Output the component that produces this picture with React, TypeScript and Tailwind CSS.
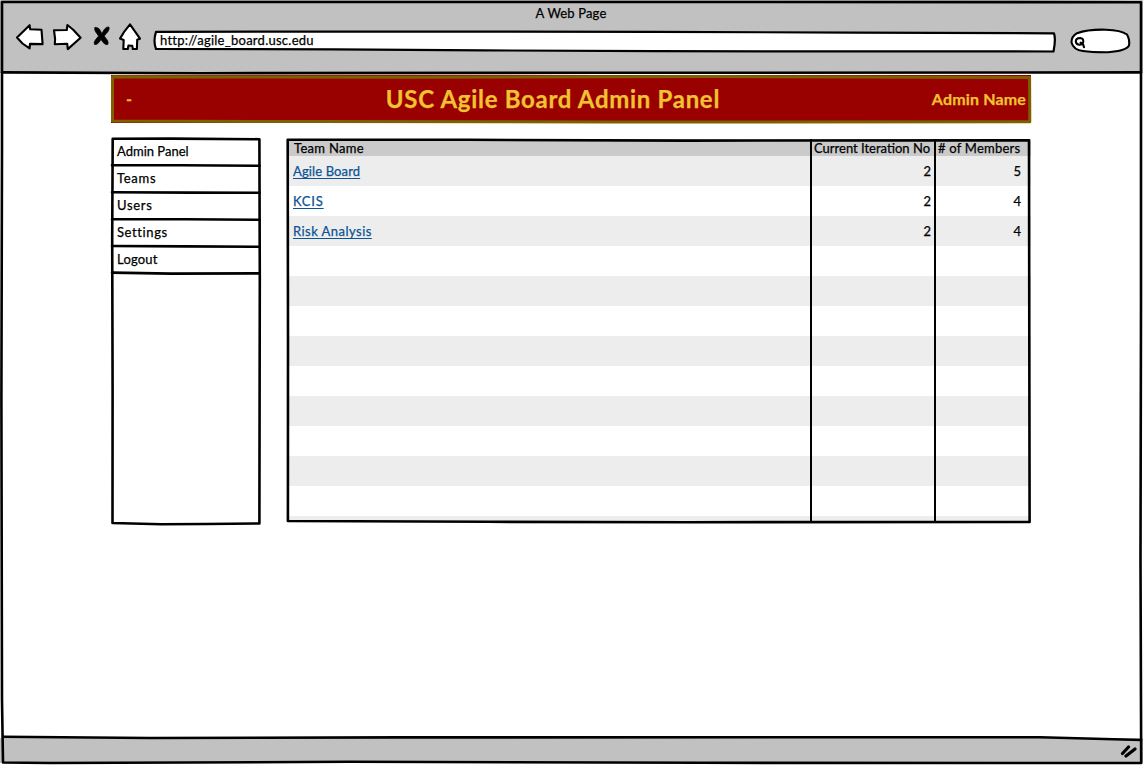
import type { ReactNode } from "react";

const menu = [
  { label: "Admin Panel", tracking: "tracking-[0px]" },
  { label: "Teams", tracking: "tracking-[0.7px]" },
  { label: "Users", tracking: "tracking-[0.7px]" },
  { label: "Settings", tracking: "tracking-[0.6px]" },
  { label: "Logout", tracking: "tracking-[0.2px]" },
];

const teams = [
  { name: "Agile Board", iteration: 2, members: 5, tracking: "tracking-[0.12px]" },
  { name: "KCIS", iteration: 2, members: 4, tracking: "tracking-[0.8px]" },
  { name: "Risk Analysis", iteration: 2, members: 4, tracking: "tracking-[0.46px]" },
];

const emptyRows = [3, 4, 5, 6, 7, 8, 9, 10, 11, 12];

/* Hand-drawn outline laid over a box; it never takes part in the layout. */
function Sketch({ w, h, children }: { w: number; h: number; children: ReactNode }) {
  return (
    <svg
      className="pointer-events-none absolute inset-0 overflow-visible"
      width={w}
      height={h}
      viewBox={`0 0 ${w} ${h}`}
      fill="none"
      stroke="#000"
      strokeWidth={2.6}
      strokeLinejoin="round"
      strokeLinecap="round"
    >
      {children}
    </svg>
  );
}

function NavIcons() {
  return (
    <svg
      className="ml-[14px] mt-[2px] shrink-0"
      width={130}
      height={32}
      viewBox="14 22 130 32"
      fill="#fff"
      stroke="#000"
      strokeWidth={2.1}
      strokeLinejoin="round"
      strokeLinecap="round"
    >
      <path d="M17 37.5 L29.6 25.2 L30.2 29.3 L41.5 29.7 L42.6 44.1 L30 43.9 L29.6 48.4 L22.5 43.5 Z" />
      <path d="M54 30.2 L66.8 30 L67.4 25 L73.2 29.8 L80.6 37.8 L67.8 49.1 L67.2 43.7 L54.8 44.3 L55.1 39 Z" />
      <path
        d="M95 27.6 Q97.5 26.8 99.5 29.2 L101.8 33.4 L104.6 29 Q106.8 26.4 109 27 Q109.8 29 108 31.6 L104.2 36 L107.6 40.6 Q108.8 43.4 107.6 44.6 Q105 45 103.2 42.6 L101 39.6 L98.4 43 Q96.4 45.2 94.4 44.4 Q93.4 42.4 95.6 39.6 L98.6 36 L95.4 31.6 Q94 29 95 27.6 Z"
        fill="#000"
        strokeWidth={0.7}
      />
      <path d="M130 24.4 L140 38.7 L137.2 39.8 L136.9 48.9 L132.8 49 L132.3 45.8 L128.4 45.6 L127.8 49 L123.3 48.9 L123.7 40 L120 38.6 L124.5 31.3 Z" />
    </svg>
  );
}

function BrowserBar() {
  return (
    <header className="h-[73px] shrink-0 bg-[#c1c1c1]">
      <div className="flex h-5 items-end justify-center pr-px text-[13px] leading-[14px] tracking-[0.15px]">
        A Web Page
      </div>
      <div className="flex items-start">
        <NavIcons />
        <div className="relative ml-[10px] mt-[11px] flex h-5 w-[901px] items-start pl-[6px] pt-px">
          <Sketch w={901} h={20}>
            <path
              d="M2 0.8 L220 0.6 L500 0.8 L700 1.6 L900 2.3 Q902 8 899.5 20.5 L500 20.2 L330 19.4 L180 18.4 L2 18 Q-1 10 2 0.8 Z"
              fill="#fff"
              strokeWidth={2.2}
            />
          </Sketch>
          <span className="relative text-[13px] leading-4 tracking-[0.26px]">http://agile_board.usc.edu</span>
        </div>
        <svg className="ml-[14px] mt-[7px]" width={64} height={28} viewBox="1069 27 64 28" fill="none" stroke="#000" strokeWidth={2.1} strokeLinecap="round">
          <path d="M1077 33.2 Q1088 29.2 1106 29.7 Q1121 30 1127 34.5 Q1130 40 1129 45.5 Q1126 51 1108 52.2 Q1092 52.3 1083 51 Q1073.5 50 1071.5 42.5 Q1071.3 36.5 1077 33.2 Z" fill="#fff" />
          <path d="M1075.8 41.6 Q1075.8 38 1080 38 Q1083.8 38.4 1083.2 42 Q1082.5 44.8 1079.5 44.7 Q1076.2 44.6 1075.8 41.6 Z M1080.6 42.6 L1083.2 44.6 L1084 47.2" />
        </svg>
      </div>
    </header>
  );
}

function Banner() {
  return (
    <div className="relative flex h-[48px] w-[920px] items-center bg-[#990000] px-[5px] font-bold text-[#f1c232]">
      <Sketch w={920} h={48}>
        <path d="M1.5 1.8 L300 2.2 L600 1.6 L918.6 2.6 L918.8 46.8 L500 47 L200 46.6 L1.5 46 Z" stroke="#7f6000" strokeWidth={3} />
      </Sketch>
      <div className="w-[100px] pl-[10px] text-[16px]">-</div>
      <h1 className="flex-1 pr-[42px] text-center text-[24px] leading-7 tracking-[0.7px]">USC Agile Board Admin Panel</h1>
      <div className="whitespace-nowrap text-[16px] tracking-[0.16px]">Admin Name</div>
    </div>
  );
}

function Sidebar() {
  return (
    <nav className="relative h-[386px] w-[149px] shrink-0">
      <Sketch w={149} h={386}>
        <path d="M1.7 0.8 L60 0.6 L148.4 1.2 L148.8 140 L148.4 385.4 L95 386 L50 386.2 L1.5 385 L1.6 250 L1.2 100 Z" />
        <path d="M1 27.3 L70 27.3 L148.6 27.8 M1 54.2 L80 54.6 L148.6 54.8 M1 81.2 L75 81.3 L148.6 81.8 M1 108 L75 108.4 L148.6 108.8 M1 134.6 L60 135.6 L148.6 135.4" />
      </Sketch>
      <ul>
        {menu.map((m) => (
          <li key={m.label} className="flex h-[27px] items-center pl-[6px] text-[13px]">
            <a className={m.tracking}>{m.label}</a>
          </li>
        ))}
      </ul>
    </nav>
  );
}

function TeamTable() {
  return (
    <section className="relative mt-px h-[384px] w-[744px] shrink-0 text-[13px]">
      <div className="flex h-[383px] flex-col overflow-hidden">
        <div className="grid h-[17px] shrink-0 grid-cols-[523px_124px_97px] bg-[#cacaca] leading-[19px]">
          <div className="pl-[7px] tracking-[0.3px]">Team Name</div>
          <div className="whitespace-nowrap border-l-2 border-black pl-[2px] tracking-[0px]">Current Iteration No</div>
          <div className="whitespace-nowrap border-l-2 border-black pl-[2px] tracking-[0.22px]"># of Members</div>
        </div>
        {teams.map((t) => (
          <div key={t.name} className="grid h-[30px] shrink-0 grid-cols-[523px_124px_97px] leading-[30px] odd:bg-white even:bg-[#ededed]">
            <div className="pl-[6px]">
              <a className={`${t.tracking} text-[#0b5394] underline decoration-1 underline-offset-2`}>{t.name}</a>
            </div>
            <div className="border-l-2 border-black pr-[3px] text-right">{t.iteration}</div>
            <div className="border-l-2 border-black pr-[10px] text-right">{t.members}</div>
          </div>
        ))}
        {emptyRows.map((n) => (
          <div key={n} className="grid h-[30px] shrink-0 grid-cols-[523px_124px_97px] odd:bg-white even:bg-[#ededed]">
            <div />
            <div className="border-l-2 border-black" />
            <div className="border-l-2 border-black" />
          </div>
        ))}
      </div>
      <Sketch w={744} h={384}>
        <path d="M0.7 0.8 L180 0.8 L400 1.6 L742 1.4 L742.3 200 L742.6 383 L400 383.2 L200 382.8 L0.9 382 L1 200 Z" />
      </Sketch>
    </section>
  );
}

export default function App() {
  return (
    <div className="relative flex h-[765px] w-[1143px] flex-col overflow-hidden bg-white font-['Lato','Open_Sans',sans-serif] text-black [-webkit-text-stroke:0.25px_currentColor]">
      <BrowserBar />
      <main className="flex flex-1 flex-col pl-[111px] pt-[2px]">
        <Banner />
        <div className="mt-[15px] flex gap-[27px]">
          <Sidebar />
          <TeamTable />
        </div>
      </main>
      <footer className="mb-[2px] flex h-[25px] shrink-0 items-center justify-end bg-[#c1c1c1] pr-[5px]">
        <svg width={18} height={14} viewBox="0 0 18 14" stroke="#000" strokeWidth={3.2} strokeLinecap="round">
          <path d="M2.5 9.5 L8.5 3 M6 12 L15 5" />
        </svg>
      </footer>
      <Sketch w={1143} h={765}>
        <path d="M2 2 L600 2 L1141 2.2 L1141 300 L1140.5 560 L1141.2 763 L700 762.8 L350 761.8 L50 763 L3 762.5 L2 700 L1.4 400 L2 150 Z" />
        <path d="M2 72.4 L200 73.2 L600 72.8 L1141 72.4 M3 736.8 L150 738 L400 737.4 L1040 737.2 L1141 740" />
      </Sketch>
    </div>
  );
}
